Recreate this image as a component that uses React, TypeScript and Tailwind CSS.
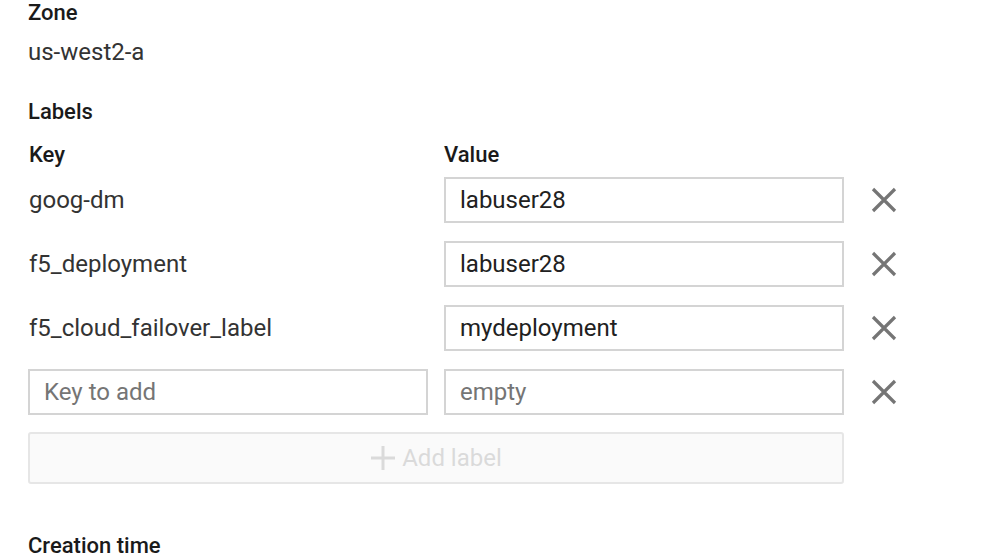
import React from "react";

const font = { fontFamily: "Roboto, 'Liberation Sans', sans-serif" };

function CloseIcon() {
  return (
    <svg width="26" height="26" viewBox="0 0 26 26" className="block">
      <path d="M2 2 L24 24 M24 2 L2 24" stroke="#757575" strokeWidth="3.2" fill="none" />
    </svg>
  );
}

const rows = [
  { key: "goog-dm", value: "labuser28" },
  { key: "f5_deployment", value: "labuser28" },
  { key: "f5_cloud_failover_label", value: "mydeployment" },
];

export default function App() {
  return (
    <div className="w-[1002px] h-[554px] overflow-hidden bg-white pl-[28px]" style={font}>
      <div className="text-[22px] font-medium text-[#1a1a1a] leading-[26px]">Zone</div>
      <div className="text-[24px] text-[#333333] leading-[28px] mt-[12px]">us-west2-a</div>
      <div className="text-[22px] font-medium text-[#1a1a1a] leading-[26px] mt-[33px]">Labels</div>
      <div className="grid grid-cols-[400px_400px_60px] gap-x-[16px] mt-[17px]">
        <div className="text-[22px] font-medium text-[#1a1a1a] leading-[26px] pl-[1px]">Key</div>
        <div className="text-[22px] font-medium text-[#1a1a1a] leading-[26px]">Value</div>
        <div />
      </div>
      <div className="flex flex-col gap-[18px] mt-[9px]">
        {rows.map((r) => (
          <div key={r.key} className="grid grid-cols-[400px_400px_60px] gap-x-[16px] items-center h-[46px]">
            <div className="text-[24px] text-[#333333] pl-[1px] leading-[28px]">{r.key}</div>
            <div className="h-[46px] border-2 border-[#d4d4d4] flex items-center px-[14px] text-[24px] text-[#212121]">
              {r.value}
            </div>
            <div className="pl-[11px]">
              <CloseIcon />
            </div>
          </div>
        ))}
        <div className="grid grid-cols-[400px_400px_60px] gap-x-[16px] items-center h-[46px]">
          <div className="h-[46px] border-2 border-[#d4d4d4] flex items-center px-[14px] text-[24px] text-[#757575]">
            Key to add
          </div>
          <div className="h-[46px] border-2 border-[#d4d4d4] flex items-center px-[14px] text-[24px] text-[#757575]">
            empty
          </div>
          <div className="pl-[11px]">
            <CloseIcon />
          </div>
        </div>
      </div>
      <div className="w-[816px] h-[52px] mt-[17px] border-2 border-[#e6e6e6] rounded-[3px] bg-[#fafafa] flex items-center justify-center gap-[6px] text-[24px] text-[#dadada]">
        <svg width="26" height="26" viewBox="0 0 26 26">
          <path d="M13 1 V25 M1 13 H25" stroke="#dadada" strokeWidth="3" />
        </svg>
        <span>Add label</span>
      </div>
      <div className="text-[22px] font-medium text-[#1a1a1a] leading-[26px] mt-[49px]">Creation time</div>
    </div>
  );
}
